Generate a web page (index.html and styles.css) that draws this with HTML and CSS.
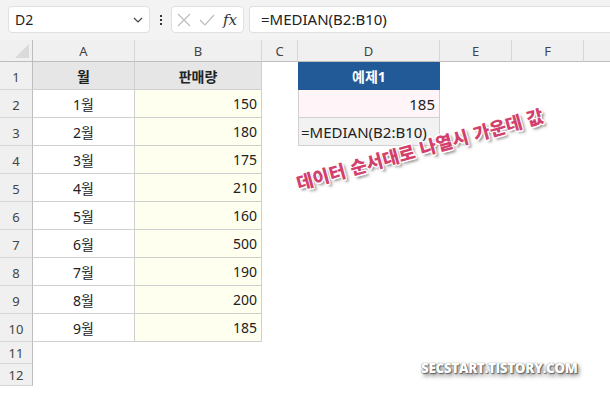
FILE: index.html
```html
<!DOCTYPE html>
<html lang="ko">
<head>
  <meta charset="UTF-8" />
  <title>MEDIAN</title>
  <link rel="stylesheet" href="styles.css">
</head>
<body>
  <div class="toolbar">
    <div class="namebox">
      <span>D2</span>
      <svg class="chev" width="10" height="6" viewBox="0 0 10 6"><path d="M1 1l4 4 4-4" fill="none" stroke="#444" stroke-width="1.2"/></svg>
    </div>
    <div class="dots"><i></i><i></i><i></i></div>
    <div class="fxbox">
      <svg width="14" height="14" viewBox="0 0 14 14"><path d="M1 1l12 12M13 1L1 13" stroke="#bdbdbd" stroke-width="1.2"/></svg>
      <svg width="16" height="14" viewBox="0 0 16 14"><path d="M1 7l5 5L15 2" fill="none" stroke="#bdbdbd" stroke-width="1.2"/></svg>
      <span class="fx">fx</span>
    </div>
    <div class="formula">=MEDIAN(B2:B10)</div>
  </div>

  <div class="sheet">
    <div class="corner"></div>
    <div class="colhead">A</div><div class="colhead">B</div><div class="colhead">C</div><div class="colhead">D</div><div class="colhead">E</div><div class="colhead">F</div><div class="colhead last"></div>

    <div class="rowhead">1</div>
    <div class="cell title">월</div><div class="cell title">판매량</div><div></div>
    <div class="cell dleft blue">예제1</div><div></div><div></div><div></div>

    <div class="rowhead">2</div>
    <div class="cell center">1월</div><div class="cell num">150</div><div></div>
    <div class="cell dleft pink num">185</div><div></div><div></div><div></div>

    <div class="rowhead">3</div>
    <div class="cell center">2월</div><div class="cell num">180</div><div></div>
    <div class="cell dleft gray">=MEDIAN(B2:B10)</div><div></div><div></div><div></div>

    <div class="rowhead">4</div>
    <div class="cell center">3월</div><div class="cell num">175</div><div></div><div></div><div></div><div></div><div></div>

    <div class="rowhead">5</div>
    <div class="cell center">4월</div><div class="cell num">210</div><div></div><div></div><div></div><div></div><div></div>

    <div class="rowhead">6</div>
    <div class="cell center">5월</div><div class="cell num">160</div><div></div><div></div><div></div><div></div><div></div>

    <div class="rowhead">7</div>
    <div class="cell center">6월</div><div class="cell num">500</div><div></div><div></div><div></div><div></div><div></div>

    <div class="rowhead">8</div>
    <div class="cell center">7월</div><div class="cell num">190</div><div></div><div></div><div></div><div></div><div></div>

    <div class="rowhead">9</div>
    <div class="cell center">8월</div><div class="cell num">200</div><div></div><div></div><div></div><div></div><div></div>

    <div class="rowhead">10</div>
    <div class="cell center">9월</div><div class="cell num">185</div><div></div><div></div><div></div><div></div><div></div>

    <div class="rowhead small">11</div>
    <div></div><div></div><div></div><div></div><div></div><div></div><div></div>

    <div class="rowhead small">12</div>
    <div></div><div></div><div></div><div></div><div></div><div></div><div></div>

    <div class="note">데이터 순서대로 나열시 가운데 값</div>
    <div class="mark">SECSTART.TISTORY.COM</div>
  </div>
</body>
</html>
```

FILE: styles.css
```css
* {
  box-sizing: border-box;
}
body {
  margin: 0;
  width: 610px;
  height: 393px;
  overflow: hidden;
  background: #fff;
  font-family: "Noto Sans", "Noto Sans CJK KR", sans-serif;
  color: #222;
}
.toolbar {
  height: 40px;
  background: #f3f3f3;
  display: flex;
  align-items: flex-start;
  padding: 6px 0 0 8px;
}
.namebox {
  width: 142px;
  height: 27px;
  background: #fff;
  border: 1px solid #e0e0e0;
  border-radius: 4px;
  display: flex;
  align-items: center;
  justify-content: space-between;
  padding: 0 6px 0 6px;
  font-size: 14px;
}
.dots {
  width: 21px;
  height: 27px;
  display: flex;
  flex-direction: column;
  align-items: center;
  justify-content: center;
  gap: 2px;
}
.dots i {
  width: 2px;
  height: 2px;
  background: #333;
  display: block;
}
.fxbox {
  width: 73px;
  height: 27px;
  background: #fff;
  border: 1px solid #e0e0e0;
  border-radius: 4px;
  display: flex;
  align-items: center;
  gap: 8px;
  padding: 0 0 0 5px;
}
.fx {
  font-family: "DejaVu Serif", "Liberation Serif", serif;
  font-style: italic;
  font-size: 15px;
  color: #333;
}
.formula {
  flex: 1;
  height: 27px;
  margin-left: 5px;
  background: #fff;
  border: 1px solid #e0e0e0;
  border-right: none;
  border-radius: 4px 0 0 4px;
  padding: 2px 0 0 11px;
  font-size: 15px;
}
.sheet {
  position: relative;
  display: grid;
  grid-template-columns: 33px 102px 127px 36px 142px 72px 72px 1fr;
  grid-template-rows: 22px repeat(10, 28px) 22px 22px;
  font-size: 14px;
}
.corner {
  background: #f0f0f0;
  border-right: 1px solid #bdbdbd;
  border-bottom: 1px solid #bdbdbd;
  position: relative;
}
.corner::after {
  content: "";
  position: absolute;
  right: 3px;
  bottom: 3px;
  border-left: 14px solid transparent;
  border-bottom: 14px solid #dadada;
}
.colhead {
  background: #f0f0f0;
  border-right: 1px solid #d6d6d6;
  border-bottom: 1px solid #bdbdbd;
  display: flex;
  align-items: center;
  justify-content: center;
  font-size: 13px;
  color: #444;
}
.colhead.last {
  border-right: none;
}
.rowhead {
  background: #f0f0f0;
  border-right: 1px solid #bdbdbd;
  border-bottom: 1px solid #d6d6d6;
  display: flex;
  align-items: flex-end;
  justify-content: center;
  padding-bottom: 3px;
  font-size: 13px;
  color: #444;
}
.rowhead.small {
  align-items: center;
  padding-bottom: 0;
}
.cell {
  border-right: 1px solid #d0d0d0;
  border-bottom: 1px solid #d0d0d0;
  display: flex;
  align-items: center;
  padding: 0 4px;
  white-space: nowrap;
}
.title {
  background: #e6e6e6;
  justify-content: center;
  font-weight: 700;
}
.center {
  justify-content: center;
}
.num {
  justify-content: flex-end;
  background: #fffff0;
}
.dleft {
  border-left: 1px solid #d0d0d0;
}
.blue {
  background: #215a96;
  color: #fff;
  font-weight: 700;
  justify-content: center;
  border-color: #215a96;
}
.pink {
  background: #fff5f8;
  font-size: 15px;
}
.gray {
  background: #f2f2f2;
  font-size: 15px;
  padding-left: 2px;
}
.note {
  position: absolute;
  left: 300px;
  top: 129px;
  transform: rotate(-15.5deg);
  transform-origin: left bottom;
  font-family: "Noto Sans CJK KR", sans-serif;
  font-size: 18px;
  font-weight: 900;
  color: #d2416e;
  letter-spacing: 0.2px;
  text-shadow: -1px -1px 0 #fff, 1px -1px 0 #fff, -1px 1px 0 #fff, 1px 1px 0 #fff, 0 -1.5px 0 #fff, 0 1.5px 0 #fff, 2px 3px 3px rgba(0, 0, 0, 0.5);
  white-space: nowrap;
}
.mark {
  position: absolute;
  left: 421px;
  top: 319px;
  font-family: "Open Sans", "Liberation Sans", sans-serif;
  font-size: 13.5px;
  font-weight: 800;
  color: #fff;
  letter-spacing: -0.4px;
  text-shadow: 0 0 1px #555, 1px 1px 1px #666, 2px 3px 4px rgba(0, 0, 0, 0.5);
}
```
